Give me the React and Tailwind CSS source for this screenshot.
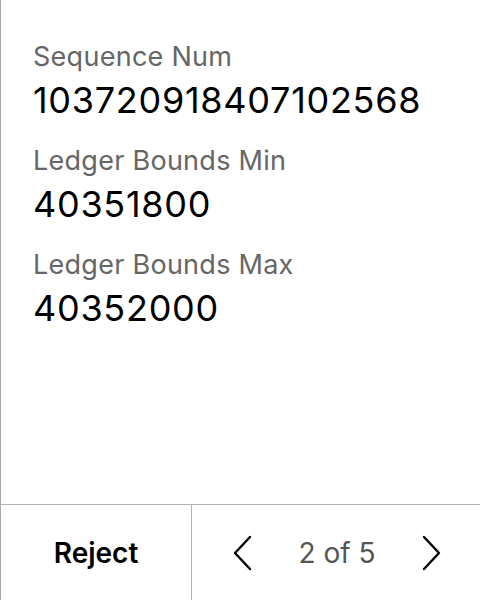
export default function App() {
  const fields = [
    { label: "Sequence Num", value: "103720918407102568" },
    { label: "Ledger Bounds Min", value: "40351800" },
    { label: "Ledger Bounds Max", value: "40352000" },
  ];

  return (
    <div className="h-[600px] w-[480px] bg-white border-l border-[#acacac] flex flex-col" style={{ fontFamily: "Inter, 'Noto Sans', sans-serif" }}>
      {/* details */}
      <div className="flex-1 pl-[32px] pt-[41px] flex flex-col gap-[23px]">
        {fields.map((f) => (
          <div key={f.label} className="flex flex-col gap-[5px]">
            <div className="text-[27px] leading-[32px] tracking-[0.01em] text-[#666666]">{f.label}</div>
            <div className="text-[36px] leading-[44px] tracking-[0.02em] text-black">{f.value}</div>
          </div>
        ))}
      </div>

      {/* footer */}
      <div className="h-[96px] border-t border-[#b3b3b3] flex">
        <button className="w-[191px] border-r border-[#b3b3b3] flex items-center justify-center text-[28px] font-semibold text-black">
          Reject
        </button>
        <div className="flex-1 flex items-center justify-between pl-[40px] pr-[38px]">
          <svg width="21" height="36" viewBox="0 0 21 36" fill="none" stroke="black" strokeWidth="2.4" strokeLinecap="round" strokeLinejoin="round">
            <polyline points="18,2 3,18 18,34" />
          </svg>
          <span className="text-[28px] text-[#555555]">2 of 5</span>
          <svg width="21" height="36" viewBox="0 0 21 36" fill="none" stroke="black" strokeWidth="2.4" strokeLinecap="round" strokeLinejoin="round">
            <polyline points="3,2 18,18 3,34" />
          </svg>
        </div>
      </div>
    </div>
  );
}
